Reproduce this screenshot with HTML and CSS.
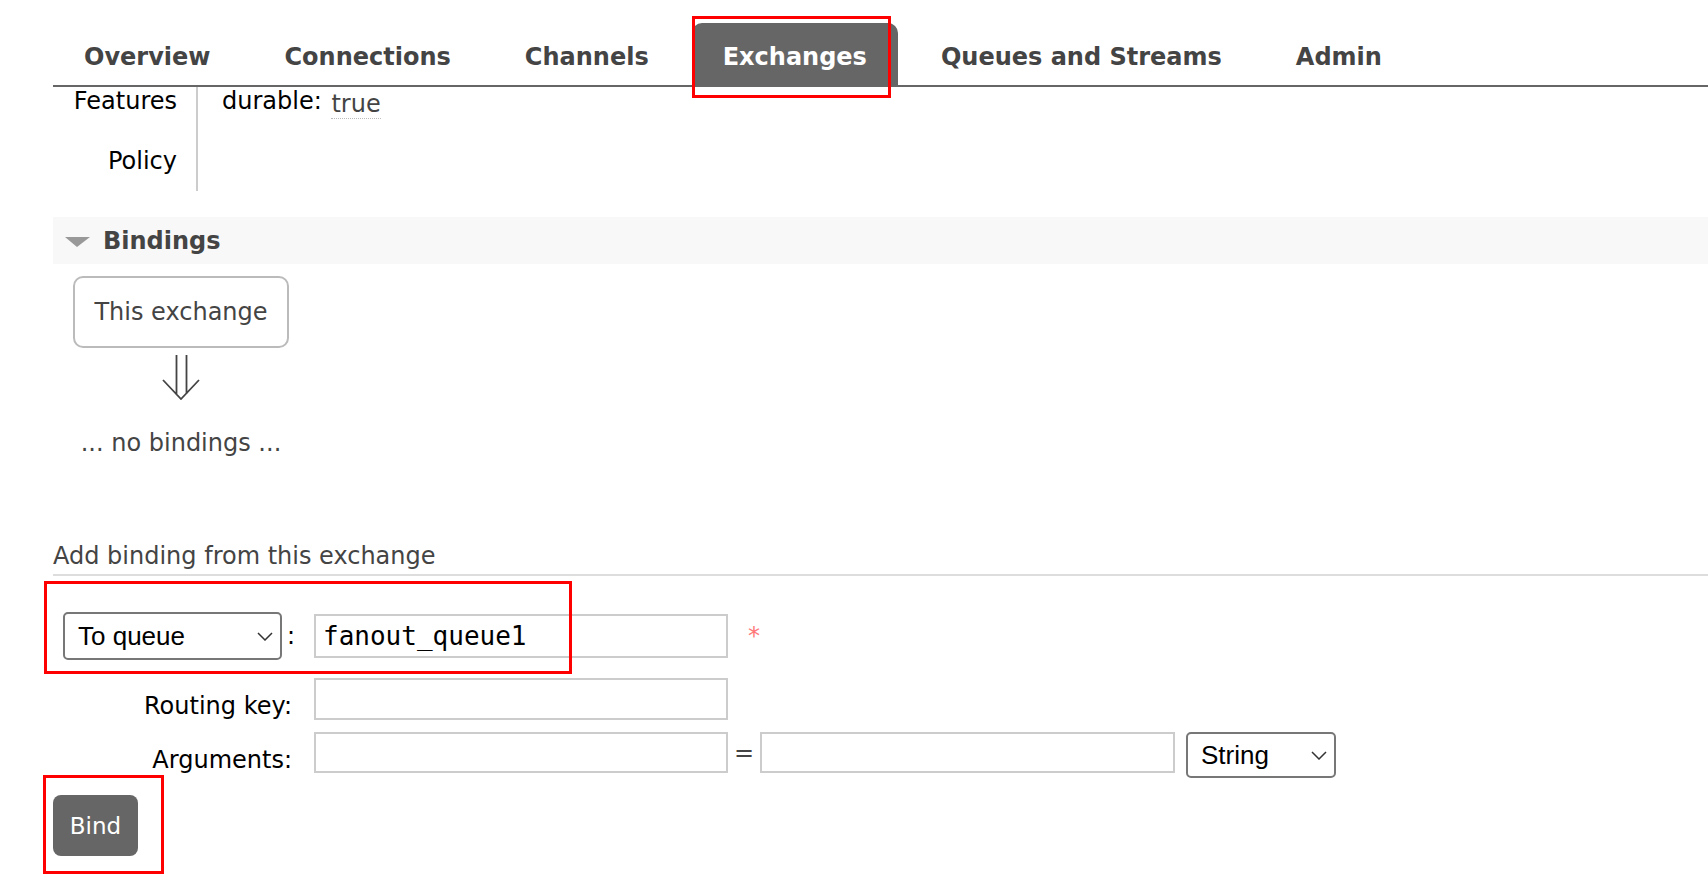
FILE: index.html
```html
<!DOCTYPE html>
<html lang="en">
<head>
<meta charset="utf-8">
<title>Exchange: amq.fanout</title>
<link rel="stylesheet" href="styles.css">
</head>
<body>
<div class="page">
  <nav class="tabs">
    <a class="tab">Overview</a>
    <a class="tab">Connections</a>
    <a class="tab">Channels</a>
    <a class="tab active">Exchanges</a>
    <a class="tab">Queues and Streams</a>
    <a class="tab">Admin</a>
  </nav>

  <div class="facts">
    <div class="fk">Features</div>
    <div class="fv">durable: <abbr class="val">true</abbr></div>
    <div class="fk">Policy</div>
    <div class="fv"></div>
  </div>

  <h2 class="section-head"><span class="tri"></span>Bindings</h2>
  <div class="bindings">
    <div class="exchange-box">This exchange</div>
    <svg class="arrow" width="38" height="45" viewBox="0 0 38 45">
      <path d="M14.5 0V40M24.5 0V39M1 25L19 44L37 25" fill="none" stroke="#444" stroke-width="1.8"/>
    </svg>
    <p class="none">... no bindings ...</p>
  </div>

  <h3 class="subhead">Add binding from this exchange</h3>
  <form class="bind-form">
    <div class="frow row1">
      <div class="lab lab-sel">
        <div class="sel sel-dest"><span>To queue</span><svg class="chev" width="16" height="9" viewBox="0 0 16 9"><path d="M1 1L8 8L15 1" fill="none" stroke="#333" stroke-width="1.5"/></svg></div>
        <span class="colon">:</span>
      </div>
      <input class="inp inp1" type="text" value="fanout_queue1">
      <span class="req">*</span>
    </div>
    <div class="frow row2">
      <div class="lab"><span class="lab-text">Routing key:</span></div>
      <input class="inp inp2" type="text" value="">
    </div>
    <div class="frow row3">
      <div class="lab"><span class="lab-text">Arguments:</span></div>
      <input class="inp inp3" type="text" value="">
      <span class="eq">=</span>
      <input class="inp inp4" type="text" value="">
      <div class="sel sel-type"><span>String</span><svg class="chev" width="16" height="9" viewBox="0 0 16 9"><path d="M1 1L8 8L15 1" fill="none" stroke="#333" stroke-width="1.5"/></svg></div>
    </div>
    <button class="bind-btn" type="button">Bind</button>
  </form>
</div>

<div class="mark m1"></div>
<div class="mark m2"></div>
<div class="mark m3"></div>
</body>
</html>
```

FILE: styles.css
```css
* {
  box-sizing: border-box;
}

html,
body {
  margin: 0;
  padding: 0;
  background: #fff;
}

body {
  position: relative;
  width: 1708px;
  height: 890px;
  overflow: hidden;
  font-family: "DejaVu Sans", Verdana, sans-serif;
  font-size: 24px;
  line-height: 28px;
  color: #000;
}

.page {
  padding-left: 53px;
}

/* ---------- tabs ---------- */
.tabs {
  display: flex;
  gap: 12px;
  margin-top: 23px;
  height: 64px;
  border-bottom: 2px solid #666;
}

.tab {
  display: block;
  height: 62px;
  padding: 3px 31px 0;
  line-height: 62px;
  font-size: 24px;
  font-weight: bold;
  color: #444;
  text-decoration: none;
  white-space: nowrap;
}

.tab.active {
  background: #666;
  color: #fff;
  border-radius: 10px 10px 0 0;
}

/* ---------- facts ---------- */
.facts {
  display: grid;
  grid-template-columns: 145px 1fr;
  grid-template-rows: 60px 44px;
}

.fk {
  text-align: right;
  padding-right: 19px;
  border-right: 2px solid #ccc;
}

.fv {
  padding-left: 24px;
}

.val {
  display: inline-block;
  margin-left: 2px;
  vertical-align: -3px;
  line-height: 27px;
  color: #444;
  text-decoration: none;
  border-bottom: 1px dotted #bbb;
}

/* ---------- bindings ---------- */
.section-head {
  display: flex;
  align-items: center;
  margin: 26px 0 0;
  height: 47px;
  background: #f8f8f8;
  font-size: 24px;
  font-weight: bold;
  color: #444;
}

.tri {
  width: 0;
  height: 0;
  margin: 3px 13px 0 12px;
  border-left: 12px solid transparent;
  border-right: 13px solid transparent;
  border-top: 10px solid #999;
}

.bindings {
  display: flex;
  flex-direction: column;
  align-items: center;
  width: 216px;
  margin: 12px 0 0 20px;
}

.exchange-box {
  display: flex;
  align-items: center;
  justify-content: center;
  width: 216px;
  height: 72px;
  border: 2px solid #bbb;
  border-radius: 10px;
  color: #444;
  white-space: nowrap;
}

.arrow {
  display: block;
  margin-top: 7px;
}

.none {
  margin: 29px 0 0;
  color: #444;
  white-space: nowrap;
}

/* ---------- add binding form ---------- */
.subhead {
  margin: 86px 0 0;
  padding-bottom: 4px;
  font-size: 24px;
  line-height: 27px;
  font-weight: normal;
  color: #444;
  border-bottom: 2px solid #ddd;
}

.bind-form {
  margin-top: 36px;
}

.frow {
  display: flex;
  align-items: flex-start;
}

.row1 {
  align-items: center;
}

.row2 {
  margin-top: 18px;
}

.row3 {
  margin-top: 12px;
}

.lab {
  display: flex;
  justify-content: flex-end;
  width: 239px;
  flex: none;
}

.lab-sel {
  justify-content: flex-start;
  align-items: center;
}

.lab-text {
  padding-top: 14px;
  white-space: nowrap;
}

.colon {
  margin-left: 5px;
}

.sel {
  display: flex;
  align-items: center;
  justify-content: space-between;
  flex: none;
  background: #fff;
  border: 2px solid #777;
  border-radius: 5px;
  font-family: "Liberation Sans", Arial, sans-serif;
  font-size: 26px;
  color: #000;
}

.chev {
  display: block;
}

.sel-dest {
  width: 219px;
  height: 48px;
  margin-left: 10px;
  padding: 0 7px 0 13px;
}

.sel-type {
  width: 150px;
  height: 46px;
  margin-left: 11px;
  padding: 0 7px 0 13px;
}

.inp {
  display: block;
  flex: none;
  margin: 0 0 0 22px;
  padding: 0 7px;
  border: 2px solid #ccc;
  border-radius: 0;
  outline: none;
  background: #fff;
  font-family: "DejaVu Sans Mono", monospace;
  font-size: 26px;
  color: #000;
}

.inp1 {
  width: 414px;
  height: 44px;
}

.inp2 {
  width: 414px;
  height: 42px;
}

.inp3 {
  width: 414px;
  height: 41px;
}

.inp4 {
  width: 415px;
  height: 41px;
  margin-left: 0;
}

.eq {
  display: flex;
  align-items: center;
  justify-content: center;
  width: 32px;
  height: 41px;
  color: #444;
}

.req {
  margin-left: 20px;
  color: #f77;
}

.bind-btn {
  display: block;
  margin-top: 17px;
  width: 85px;
  height: 61px;
  padding: 0;
  border: none;
  border-radius: 8px;
  background: #666;
  color: #fff;
  font-family: "DejaVu Sans", Verdana, sans-serif;
  font-size: 23px;
}

/* ---------- annotation boxes ---------- */
.mark {
  position: absolute;
  border: 3px solid #f00;
  pointer-events: none;
}

.m1 {
  left: 692px;
  top: 16px;
  width: 199px;
  height: 82px;
}

.m2 {
  left: 44px;
  top: 581px;
  width: 528px;
  height: 93px;
}

.m3 {
  left: 43px;
  top: 775px;
  width: 121px;
  height: 99px;
}
```
